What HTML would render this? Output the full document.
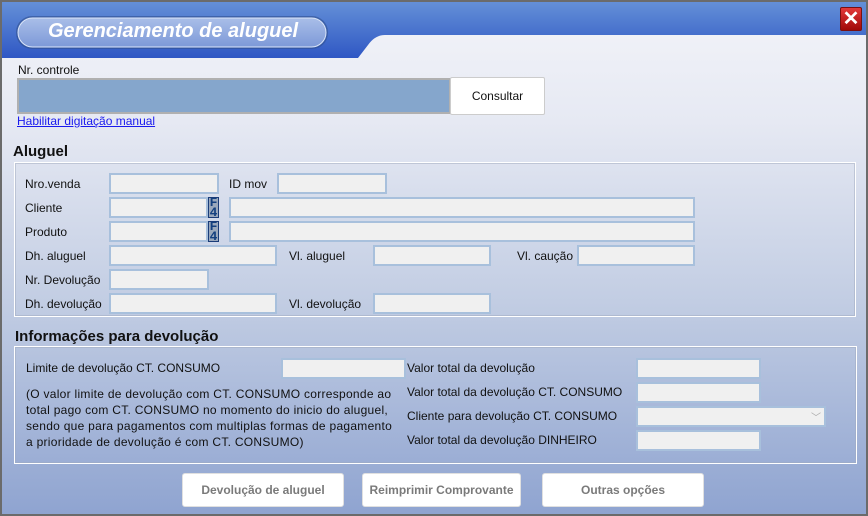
<!DOCTYPE html>
<html><head><meta charset="utf-8"><style>
*{box-sizing:border-box;margin:0;padding:0}
body{width:868px;height:516px;overflow:hidden;font-family:"Liberation Sans",Arial,sans-serif;font-size:12px;color:#111}
#win{position:absolute;left:0;top:0;width:868px;height:516px;border:2px solid #6b6b6b;background:linear-gradient(to bottom,#f3f4f9 0px,#e6e9f3 120px,#c2cde3 300px,#8ea3d0 516px);overflow:hidden}
.a{position:absolute;white-space:nowrap}
.in{position:absolute;background:#f0f0f0;border:2px solid #a8c0dc;height:21px}
.grp{position:absolute;border:1px solid #fff;box-shadow:inset 0 0 0 1px rgba(160,170,190,.5)}
.btn{position:absolute;background:#fff;border:1px solid #e0e0e0;border-radius:3px;color:#7a7a7a;font-weight:bold;text-align:center;line-height:32px;height:34px}
.f4{position:absolute;width:11px;height:21px;background:#9aa8bc;border:1px solid #1a3c78;color:#14407f;font-weight:bold;font-family:"Liberation Mono",monospace;font-size:13px;line-height:10px;text-align:center;overflow:hidden}
</style></head><body>
<div id="win">
<svg class="a" style="left:-2px;top:-2px" width="868" height="62">
<defs><linearGradient id="bg" x1="0" y1="0" x2="0" y2="1"><stop offset="0" stop-color="#6692d8"/><stop offset="1" stop-color="#2f57c4"/></linearGradient>
<linearGradient id="pl" x1="0" y1="0" x2="0" y2="1"><stop offset="0" stop-color="#a9bee8"/><stop offset="1" stop-color="#7d99d8"/></linearGradient></defs>
<path d="M0 0H868V35H385Q375 35 368 45L358 58H0Z" fill="url(#bg)"/>
<rect x="16" y="16" width="312" height="33" rx="16" fill="#30508f" opacity=".6"/>
<rect x="18" y="18" width="308" height="29" rx="14.5" fill="url(#pl)" stroke="#dce6f8" stroke-width="1"/>
</svg>
<div class="a" style="left:46px;top:18px;color:#fff;font-weight:bold;font-style:italic;font-size:20px">Gerenciamento de aluguel</div>
<div class="a" style="left:838px;top:5px;width:22px;height:24px;background:linear-gradient(#e23a3a,#a00808);border:1px solid #7a1010;border-radius:2px;color:#fff;font-weight:bold;font-size:20px;line-height:22px;text-align:center">✕</div>

<div class="a" style="left:16px;top:61px">Nr. controle</div>
<div class="a" style="left:15px;top:76px;width:434px;height:36px;background:#85a6cc;border:2px solid #b0b0b0"></div>
<div class="a" style="left:448px;top:75px;width:95px;height:38px;background:#fff;border:1px solid #ccc;border-radius:2px;text-align:center;line-height:36px">Consultar</div>
<div class="a" style="left:15px;top:112px;color:#1a1aee;text-decoration:underline">Habilitar digitação manual</div>

<div class="a" style="left:11px;top:141px;font-weight:bold;font-size:15px">Aluguel</div>
<div class="grp" style="left:12px;top:160px;width:842px;height:155px"></div>
<div class="a" style="left:23px;top:175px">Nro.venda</div>
<div class="in" style="left:107px;top:171px;width:110px"></div>
<div class="a" style="left:227px;top:175px">ID mov</div>
<div class="in" style="left:275px;top:171px;width:110px"></div>
<div class="a" style="left:23px;top:199px">Cliente</div>
<div class="in" style="left:107px;top:195px;width:99px"></div>
<div class="f4" style="left:206px;top:195px">F<br>4</div>
<div class="in" style="left:227px;top:195px;width:466px"></div>
<div class="a" style="left:23px;top:223px">Produto</div>
<div class="in" style="left:107px;top:219px;width:99px"></div>
<div class="f4" style="left:206px;top:219px">F<br>4</div>
<div class="in" style="left:227px;top:219px;width:466px"></div>
<div class="a" style="left:23px;top:247px">Dh. aluguel</div>
<div class="in" style="left:107px;top:243px;width:168px"></div>
<div class="a" style="left:287px;top:247px">Vl. aluguel</div>
<div class="in" style="left:371px;top:243px;width:118px"></div>
<div class="a" style="left:515px;top:247px">Vl. caução</div>
<div class="in" style="left:575px;top:243px;width:118px"></div>
<div class="a" style="left:23px;top:271px">Nr. Devolução</div>
<div class="in" style="left:107px;top:267px;width:100px"></div>
<div class="a" style="left:23px;top:295px">Dh. devolução</div>
<div class="in" style="left:107px;top:291px;width:168px"></div>
<div class="a" style="left:287px;top:295px">Vl. devolução</div>
<div class="in" style="left:371px;top:291px;width:118px"></div>

<div class="a" style="left:13px;top:326px;font-weight:bold;font-size:15px">Informações para devolução</div>
<div class="grp" style="left:12px;top:344px;width:843px;height:118px"></div>
<div class="a" style="left:24px;top:359px">Limite de devolução CT. CONSUMO</div>
<div class="in" style="left:279px;top:356px;width:125px"></div>
<div class="a" style="left:24px;top:384px;line-height:16px;letter-spacing:0.28px">(O valor limite de devolução com CT. CONSUMO corresponde ao<br>total pago com CT. CONSUMO no momento do inicio do aluguel,<br>sendo que para pagamentos com multiplas formas de pagamento<br>a prioridade de devolução é com CT. CONSUMO)</div>
<div class="a" style="left:405px;top:359px">Valor total da devolução</div>
<div class="in" style="left:634px;top:356px;width:125px"></div>
<div class="a" style="left:405px;top:383px">Valor total da devolução CT. CONSUMO</div>
<div class="in" style="left:634px;top:380px;width:125px"></div>
<div class="a" style="left:405px;top:407px">Cliente para devolução CT. CONSUMO</div>
<div class="in" style="left:634px;top:404px;width:190px"><span class="a" style="right:3px;top:1px;color:#aaa;font-size:10px">﹀</span></div>
<div class="a" style="left:405px;top:431px">Valor total da devolução DINHEIRO</div>
<div class="in" style="left:634px;top:428px;width:125px"></div>

<div class="btn" style="left:180px;top:471px;width:162px">Devolução de aluguel</div>
<div class="btn" style="left:360px;top:471px;width:159px">Reimprimir Comprovante</div>
<div class="btn" style="left:540px;top:471px;width:162px">Outras opções</div>
</div>
</body></html>
